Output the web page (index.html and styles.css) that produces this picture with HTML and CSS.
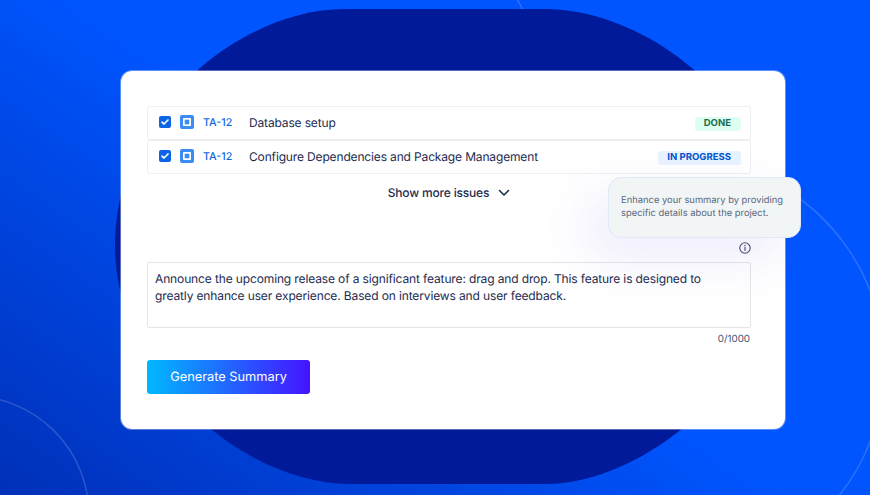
FILE: index.html
```html
<!DOCTYPE html>
<html lang="en">
<head>
<meta charset="utf-8">
<title>Generate Summary</title>
<link rel="stylesheet" href="styles.css">
</head>
<body>
<main class="stage">
  <svg class="backdrop" width="870" height="495" viewBox="0 0 870 495" aria-hidden="true">
    <path class="arc" d="M517 -1 L523 10"/>
    <path class="blob" d="M345 9 H545 C650 9 779 110 779 246 C779 370 650 484 545 484 H350 C240 484 115 370 115 246 C115 110 240 9 345 9 Z"/>
    <circle class="arc" cx="-30" cy="515" r="119"/>
    <path class="arc" d="M790 192 A208 208 0 0 1 838 497"/>
  </svg>
  <section class="card">
    <ul class="issues">
      <li class="issue">
        <svg class="check" width="12" height="12" viewBox="0 0 12 12" aria-hidden="true"><rect width="12" height="12" rx="2" fill="#0c66e4"/><path d="M3 6.2 5 8 9 4" fill="none" stroke="#fff" stroke-width="1.7" stroke-linecap="round" stroke-linejoin="round"/></svg>
        <svg class="type" width="14" height="14" viewBox="0 0 14 14" aria-hidden="true"><rect width="14" height="14" rx="2" fill="#3c8cf5"/><rect x="3" y="3" width="8" height="8" rx="0.7" fill="#fff"/><rect x="4.7" y="4.7" width="4.6" height="4.6" fill="#3c8cf5"/></svg>
        <a class="key">TA-12</a>
        <span class="summary">Database setup</span>
        <span class="lozenge done">DONE</span>
      </li>
      <li class="issue">
        <svg class="check" width="12" height="12" viewBox="0 0 12 12" aria-hidden="true"><rect width="12" height="12" rx="2" fill="#0c66e4"/><path d="M3 6.2 5 8 9 4" fill="none" stroke="#fff" stroke-width="1.7" stroke-linecap="round" stroke-linejoin="round"/></svg>
        <svg class="type" width="14" height="14" viewBox="0 0 14 14" aria-hidden="true"><rect width="14" height="14" rx="2" fill="#3c8cf5"/><rect x="3" y="3" width="8" height="8" rx="0.7" fill="#fff"/><rect x="4.7" y="4.7" width="4.6" height="4.6" fill="#3c8cf5"/></svg>
        <a class="key">TA-12</a>
        <span class="summary">Configure Dependencies and Package Management</span>
        <span class="lozenge progress">IN PROGRESS</span>
      </li>
    </ul>
    <button class="more" type="button">Show more issues
      <svg width="12" height="8" viewBox="0 0 12 8" aria-hidden="true"><path d="M1.5 1.5 6 6l4.5-4.5" fill="none" stroke="#1d2b4f" stroke-width="1.6" stroke-linecap="round" stroke-linejoin="round"/></svg>
    </button>
    <div class="info-row">
      <svg width="12" height="12" viewBox="0 0 12 12" aria-hidden="true"><circle cx="6" cy="6" r="5.2" fill="none" stroke="#44546f" stroke-width="1.1"/><path d="M6 5.4v3" stroke="#44546f" stroke-width="1.2" stroke-linecap="round"/><circle cx="6" cy="3.6" r=".75" fill="#44546f"/></svg>
    </div>
    <div class="field">Announce the upcoming release of a significant feature: drag and drop. This feature is designed to greatly enhance user experience. Based on interviews and user feedback.</div>
    <div class="counter">0/1000</div>
    <button class="generate" type="button">Generate Summary</button>
    <aside class="tip">Enhance your summary by providing specific details about the project.</aside>
  </section>
</main>
</body>
</html>
```

FILE: styles.css
```css
* { box-sizing: border-box; }
html, body { margin: 0; padding: 0; }
body { font-family: Inter, "Liberation Sans", sans-serif; text-rendering: geometricPrecision; }
.stage {
  position: relative;
  width: 870px;
  height: 495px;
  overflow: hidden;
  padding: 70px 0 0 120px;
  background: linear-gradient(215deg, #0055ff 0%, #0055ff 50%, #0030b8 100%);
}
.backdrop { position: absolute; left: 0; top: 0; }
.blob { fill: #001a99; }
.arc { fill: none; stroke: rgba(255, 255, 255, 0.17); stroke-width: 1.5; }
.card {
  position: relative;
  width: 666px;
  height: 360px;
  padding: 35px 34px 0 26px;
  background: #fff;
  background-clip: padding-box;
  border: 1px solid rgba(255, 255, 255, 0.35);
  border-radius: 12px;
}
.issues { list-style: none; margin: 0; padding: 0; }
.issue {
  display: flex;
  align-items: center;
  height: 34px;
  padding: 0 9px 1.5px 11px;
  border: 1.5px solid #eeeff2;
  border-radius: 2px;
  color: #1d2b4f;
}
.check { margin-right: 9px; flex: none; }
.type { margin-right: 9px; flex: none; }
.key { width: 46px; font-size: 10.7px; font-weight: 500; color: #0c66e4; }
.summary { flex: 1; font-size: 12px; letter-spacing: -0.15px; }
.lozenge {
  height: 14px;
  line-height: 14px;
  margin-top: 4px;
  padding: 0 10px 0 9px;
  border-radius: 3px;
  font-size: 9.55px;
  font-weight: 700;
}
.done { background: #dcfff1; color: #216e4e; }
.progress { background: #e9f2ff; color: #0055cc; }
.more {
  display: flex;
  align-items: center;
  gap: 9px;
  margin: 10px auto 0;
  padding: 0;
  border: 0;
  background: none;
  font: 500 12px Inter, sans-serif;
  letter-spacing: -0.18px;
  text-rendering: geometricPrecision;
  color: #1d2b4f;
  height: 17px;
}
.info-row {
  display: flex;
  justify-content: flex-end;
  height: 12px;
  margin-top: 41px;
}
.field {
  height: 66px;
  margin-top: 8px;
  padding: 6.5px 40px 6.5px 7px;
  border: 1.5px solid #e4e5ea;
  border-radius: 2px;
  background: #fff;
  font-size: 12px;
  letter-spacing: -0.13px;
  line-height: 17px;
  color: #1d2b4f;
}
.counter {
  margin-top: 5px;
  padding-right: 1px;
  text-align: right;
  font-size: 9.8px;
  line-height: 14px;
  color: #44546f;
}
.generate {
  display: block;
  width: 163px;
  height: 34px;
  margin-top: 13px;
  padding: 0;
  border: 0;
  border-radius: 3px;
  background: linear-gradient(90deg, #00b8ff 0%, #4414ff 100%);
  color: #fff;
  font: 400 12.8px Inter, sans-serif;
  text-rendering: geometricPrecision;
}
.tip {
  position: absolute;
  left: 487px;
  top: 106px;
  width: 193px;
  height: 61px;
  padding: 16px 12px 0;
  border: 1px solid #dfe9f8;
  border-radius: 13px;
  background: #f1f5f5;
  font-size: 9.4px;
  line-height: 13.3px;
  color: #5a6780;
  box-shadow: -20px 20px 50px rgba(90, 70, 230, 0.1);
}
```
